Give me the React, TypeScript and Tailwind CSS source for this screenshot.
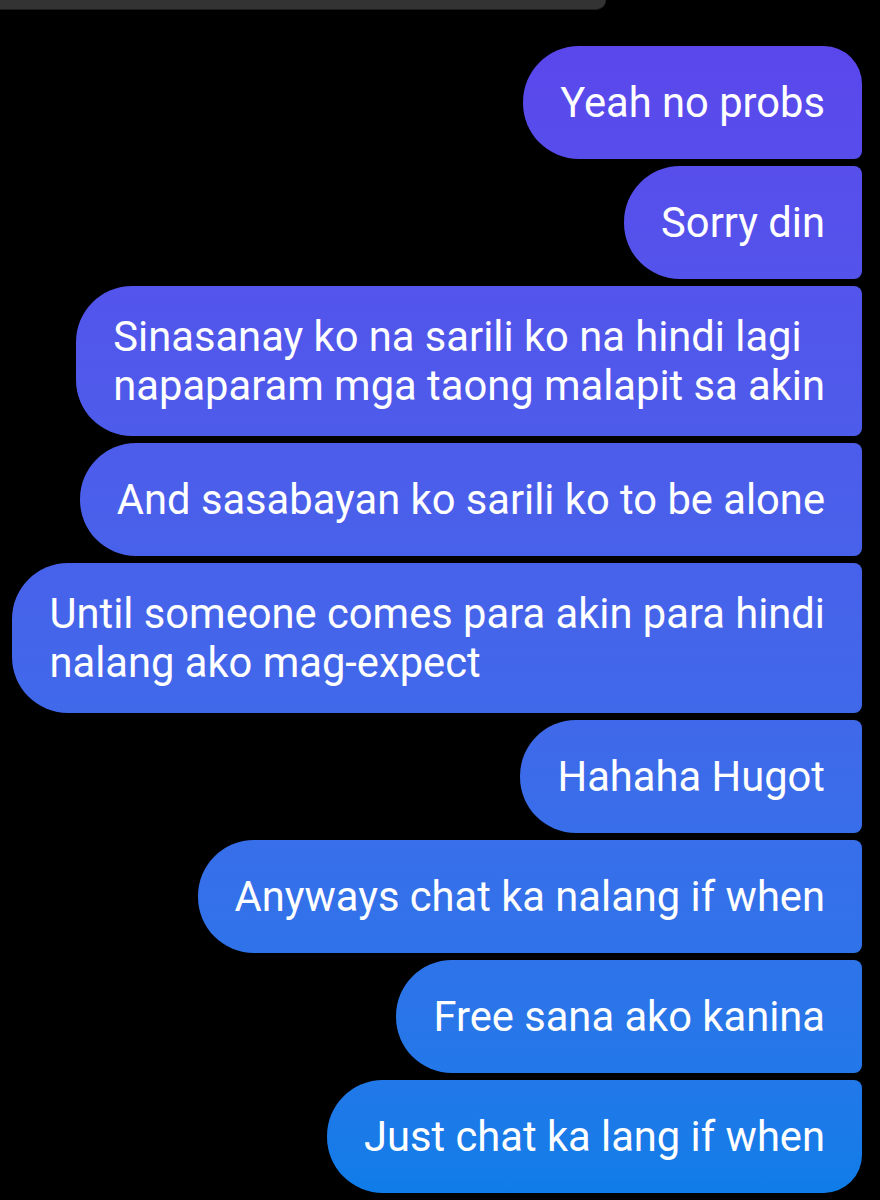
const messages: { lines: string[] }[] = [
  { lines: ['Yeah no probs'] },
  { lines: ['Sorry din'] },
  { lines: ['Sinasanay ko na sarili ko na hindi lagi', 'napaparam mga taong malapit sa akin'] },
  { lines: ['And sasabayan ko sarili ko to be alone'] },
  { lines: ['Until someone comes para akin para hindi', 'nalang ako mag-expect'] },
  { lines: ['Hahaha Hugot'] },
  { lines: ['Anyways chat ka nalang if when'] },
  { lines: ['Free sana ako kanina'] },
  { lines: ['Just chat ka lang if when'] },
]

function Bubble({ lines, first, last }: { lines: string[]; first: boolean; last: boolean }) {
  const corners = `${first ? 'rounded-tr-[38px]' : 'rounded-tr-[8px]'} ${last ? 'rounded-br-[38px]' : 'rounded-br-[8px]'}`
  return (
    <div
      className={`flex items-center min-h-[113px] px-[37px] py-[26px] rounded-l-[56px] ${corners} bg-fixed bg-gradient-to-b from-[#5c44ec] to-[#0c7de8] text-white text-[41.7px] leading-[49px] whitespace-nowrap`}
    >
      <span>
        {lines.map((l, i) => (
          <span key={i} className="block">{l}</span>
        ))}
      </span>
    </div>
  )
}

export default function App() {
  return (
    <div className="w-[880px] h-[1200px] bg-black overflow-hidden" style={{ fontFamily: 'Roboto, "Noto Sans", sans-serif' }}>
      {/* status/header remnant */}
      <div className="w-[606px] h-[10px] bg-[#333333] border-b border-[#1f1f1f] rounded-br-[22px]" />
      <div className="flex flex-col items-end gap-[7px] pr-[18px] pt-[36px]">
        {messages.map((m, i) => (
          <Bubble key={i} lines={m.lines} first={i === 0} last={i === messages.length - 1} />
        ))}
      </div>
    </div>
  )
}
